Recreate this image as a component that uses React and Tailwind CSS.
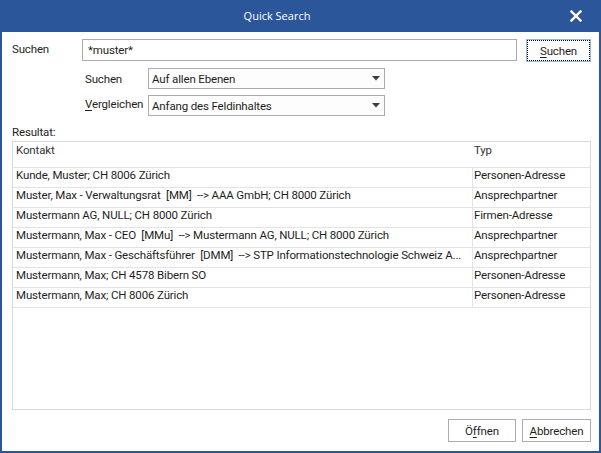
import React from "react";

const rows = [
  ["Kunde, Muster; CH 8006 Zürich", "Personen-Adresse"],
  ["Muster, Max - Verwaltungsrat  [MM]  --> AAA GmbH; CH 8000 Zürich", "Ansprechpartner"],
  ["Mustermann AG, NULL; CH 8000 Zürich", "Firmen-Adresse"],
  ["Mustermann, Max - CEO  [MMu]  --> Mustermann AG, NULL; CH 8000 Zürich", "Ansprechpartner"],
  ["Mustermann, Max - Geschäftsführer  [DMM]  --> STP Informationstechnologie Schweiz A...", "Ansprechpartner"],
  ["Mustermann, Max; CH 4578 Bibern SO", "Personen-Adresse"],
  ["Mustermann, Max; CH 8006 Zürich", "Personen-Adresse"],
];

function Arrow() {
  return (
    <svg width="8" height="5" viewBox="0 0 8 5" className="block">
      <polygon points="0,0 8,0 4,4.5" fill="#3c3c3c" />
    </svg>
  );
}

function Select({ value }) {
  return (
    <div className="w-[237px] h-[21px] border border-[#ababab] bg-[#fdfdfd] flex items-center pl-[3px] pr-[4px]">
      <span className="flex-1 leading-[14px]">{value}</span>
      <Arrow />
    </div>
  );
}

export default function App() {
  return (
    <div
      className="w-[601px] h-[453px] bg-[#2b579a] flex flex-col text-[11.5px] tracking-[-0.15px] text-[#1e1e1e]"
      style={{ fontFamily: "Roboto, 'Liberation Sans', sans-serif" }}
    >
      <div className="h-[32px] flex items-center shrink-0">
        <div
          className="flex-1 text-center text-white text-[11px] tracking-normal pt-[1px]"
          style={{ fontFamily: "'Open Sans', 'Noto Sans', sans-serif" }}
        >
          Quick Search
        </div>
        <div className="w-[47px] flex justify-center pr-[3px]">
          <svg width="12" height="12" viewBox="0 0 12 12">
            <path d="M1.5 1.5 L10.5 10.5 M10.5 1.5 L1.5 10.5" stroke="white" strokeWidth="2.4" strokeLinecap="square" />
          </svg>
        </div>
      </div>
      <div className="flex-1 mx-[2px] mb-[2px] bg-white flex flex-col pl-[10px] pr-[8px] pt-[7px] pb-[9px]">
        <div className="flex items-start">
          <div className="w-[70px] pt-[3px] leading-[14px]">Suchen</div>
          <div className="w-[435px] h-[22px] border border-[#ababab] flex items-center pl-[5px] leading-[14px]">
            *muster*
          </div>
          <div className="ml-[9px] w-[65px] h-[23px] border border-[#8fbbeb] bg-[#fdfdfd]">
            <div className="w-full h-full border border-dotted border-black flex items-center justify-center leading-[14px]">
              <span>
                <span className="underline underline-offset-[2px]">S</span>uchen
              </span>
            </div>
          </div>
        </div>
        <div className="flex items-center mt-[6px] pl-[73px]">
          <div className="w-[63px] leading-[14px] pt-[1px]">Suchen</div>
          <Select value="Auf allen Ebenen" />
        </div>
        <div className="flex items-center mt-[6px] pl-[73px]">
          <div className="w-[63px] leading-[14px] pb-[4px]">
            <span className="underline underline-offset-[2px]">V</span>ergleichen
          </div>
          <Select value="Anfang des Feldinhaltes" />
        </div>
        <div className="mt-[9px] h-[14px] leading-[14px]">Resultat:</div>
        <div className="mt-[2px] flex-1 border border-[#d9d9d9] flex flex-col">
          <div className="h-[26px] border-b border-[#e3e3e3] flex leading-[16px] text-[#333]">
            <div className="w-[460px] pl-[3px]">Kontakt</div>
            <div className="flex-1 pl-[1px]">Typ</div>
          </div>
          {rows.map(([a, b], i) => (
            <div key={i} className="h-[20px] border-b border-[#e3e3e3] flex leading-[15px]">
              <div className="w-[460px] border-r border-[#e3e3e3] pl-[3px] whitespace-pre overflow-hidden">{a}</div>
              <div className="flex-1 pl-[1px] whitespace-nowrap overflow-hidden">{b}</div>
            </div>
          ))}
        </div>
        <div className="mt-[9px] flex justify-end gap-[6px]">
          <div className="w-[68px] h-[23px] border border-[#adadad] bg-white flex items-center justify-center leading-[14px]">
            <span>
              Ö<span className="underline underline-offset-[2px]">f</span>fnen
            </span>
          </div>
          <div className="w-[69px] h-[23px] border border-[#adadad] bg-white flex items-center justify-center leading-[14px]">
            <span>
              <span className="underline underline-offset-[2px]">A</span>bbrechen
            </span>
          </div>
        </div>
      </div>
    </div>
  );
}
